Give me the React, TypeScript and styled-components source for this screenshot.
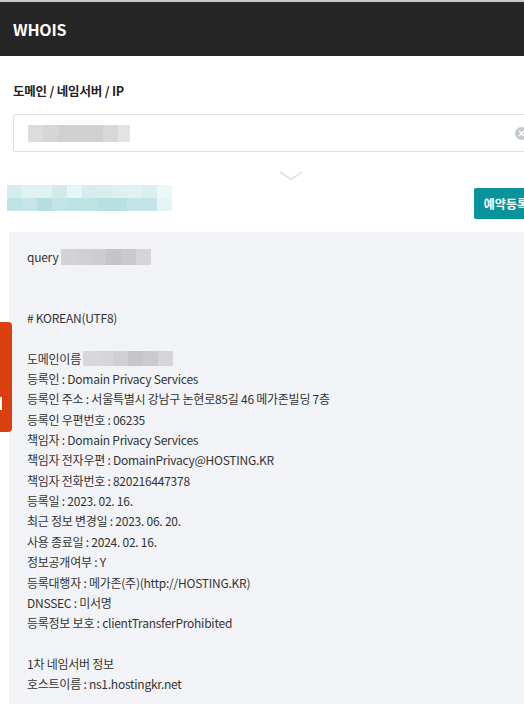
import React from "react";
import styled, { createGlobalStyle } from "styled-components";

const Global = createGlobalStyle`
  html, body { margin: 0; padding: 0; overflow: hidden; background: #fff; }
  body { font-family: "Noto Sans CJK KR", "Noto Sans", sans-serif; color: #333; }
  * { box-sizing: border-box; }
`;

const Page = styled.div`
  width: 582px;
  border-top: 2px solid #c9c9c9;
`;

const Header = styled.header`
  height: 54px;
  background: #262626;
  display: flex;
  align-items: center;
  padding: 0 13px;
`;

const Title = styled.h1`
  margin: 0;
  font-size: 16px;
  font-weight: 700;
  color: #fff;
  letter-spacing: -0.2px;
`;

const Form = styled.section`
  padding: 26px 13px 0;
`;

const Label = styled.label`
  display: block;
  font-size: 12.5px;
  font-weight: 700;
  line-height: 18px;
  color: #222;
  letter-spacing: -0.2px;
`;

const InputBox = styled.div`
  position: relative;
  margin-top: 14px;
  height: 38px;
  border: 1px solid #dcdfe3;
  border-radius: 2px;
  display: flex;
  align-items: center;
  padding-left: 14px;
`;

const Clear = styled.span`
  position: absolute;
  right: 40px;
  top: 12px;
  width: 13px;
  height: 13px;
  border-radius: 50%;
  background: #c5c9d0;
  display: flex;
  align-items: center;
  justify-content: center;
`;

const Toggle = styled.div`
  display: flex;
  justify-content: center;
  padding: 19px 0 4px;
  height: 33px;
`;

const ResultBar = styled.div`
  display: flex;
  justify-content: space-between;
  align-items: flex-start;
  padding: 0 44px 0 7px;
  height: 34px;
`;

const ReserveButton = styled.button`
  margin-top: 3px;
  height: 31px;
  padding: 0 10px;
  border: 0;
  border-radius: 2px;
  background: #08949a;
  color: #fff;
  font-family: "Noto Sans CJK KR", sans-serif;
  font-size: 12px;
  font-weight: 700;
`;

const Panel = styled.pre`
  margin: 13px 0 0 9px;
  padding: 15px 18px 20px;
  background: #f2f3f7;
  font-family: "Noto Sans CJK KR", "Noto Sans", sans-serif;
  font-size: 12px;
  line-height: 20.35px;
  letter-spacing: -0.25px;
  color: #333;
  white-space: pre;
  min-height: 480px;
`;

const Line = styled.div`
  display: flex;
  align-items: center;
  height: 20.35px;
`;

const Mosaic = styled.span<{ $cell: number; $h: number }>`
  display: inline-flex;
  flex-direction: column;
  & > span { display: flex; height: ${(p) => p.$h}px; }
  & > span > i { display: block; width: ${(p) => p.$cell}px; height: 100%; }
`;

const SideTab = styled.div`
  position: absolute;
  left: 0;
  top: 322px;
  width: 12px;
  height: 110px;
  background: #da3f0f;
  border-radius: 0 4px 4px 0;
`;

const SideMark = styled.span`
  position: absolute;
  left: 0;
  top: 75px;
  width: 2px;
  height: 13px;
  background: #fff;
`;

const Root = styled.div`
  position: relative;
`;

function Pix({ rows, cell, h }: { rows: string[][]; cell: number | number[]; h: number }) {
  return (
    <Mosaic $cell={typeof cell === "number" ? cell : 15} $h={h}>
      {rows.map((r, i) => (
        <span key={i}>
          {r.map((c, j) => (
            <i key={j} style={{ background: c, width: Array.isArray(cell) ? cell[j] : undefined }} />
          ))}
        </span>
      ))}
    </Mosaic>
  );
}

const teal = [
  ["#d5ecee", "#e0f1f2", "#e0f1f2", "#d3eaec", "#e8f5f6", "#d7ecee", "#d9edef", "#dff0f1", "#e2f2f3", "#dbeef0", "#eef7f8"],
  ["#c0e3e5", "#c6e5e7", "#b3dfe2", "#c3e4e6", "#bde3e5", "#bde3e5", "#b7e0e2", "#b7e0e2", "#c4e5e7", "#c4e5e7", "#e5f4f5"],
];

export default function App() {
  return (
    <Root>
      <Global />
      <Page>
        <Header>
          <Title>WHOIS</Title>
        </Header>
        <Form>
          <Label>도메인 / 네임서버 / IP</Label>
          <InputBox>
            <Pix rows={[["#dcdcdc", "#d6d6d6", "#d0d0d0", "#d9d9d9", "#e3e3e3"]]} cell={[15, 15, 45, 15, 12]} h={17} />
            <Clear>
              <svg width="7" height="7" viewBox="0 0 7 7">
                <path d="M1 1L6 6M6 1L1 6" stroke="#fff" strokeWidth="1.5" />
              </svg>
            </Clear>
          </InputBox>
        </Form>
        <Toggle>
          <svg width="24" height="10" viewBox="0 0 24 10">
            <polyline points="1,1 12,8.5 23,1" fill="none" stroke="#dfe1e5" strokeWidth="1.6" />
          </svg>
        </Toggle>
        <ResultBar>
          <Pix rows={teal} cell={15} h={13} />
          <ReserveButton>예약등록</ReserveButton>
        </ResultBar>
        <Panel>
          <Line>
            query&nbsp;<Pix rows={[["#d3d3d6", "#d0d0d3", "#cdcdd0", "#c6c4c8", "#cacacd", "#d6d6d9"]]} cell={15} h={16} />
          </Line>
          {"\n\n"}# KOREAN(UTF8){"\n\n"}
          <Line>
            도메인이름&nbsp;<Pix rows={[["#d8d8db", "#d6d6d9", "#d0d0d3", "#c6c6c9", "#cbcbce", "#d6d6d9"]]} cell={15} h={15} />
          </Line>
          {`등록인 : Domain Privacy Services
등록인 주소 : 서울특별시 강남구 논현로85길 46 메가존빌딩 7층
등록인 우편번호 : 06235
책임자 : Domain Privacy Services
책임자 전자우편 : DomainPrivacy@HOSTING.KR
책임자 전화번호 : 820216447378
등록일 : 2023. 02. 16.
최근 정보 변경일 : 2023. 06. 20.
사용 종료일 : 2024. 02. 16.
정보공개여부 : Y
등록대행자 : 메가존(주)(http://HOSTING.KR)
DNSSEC : 미서명
등록정보 보호 : clientTransferProhibited

1차 네임서버 정보
호스트이름 : ns1.hostingkr.net
`}
        </Panel>
      </Page>
      <SideTab>
        <SideMark />
      </SideTab>
    </Root>
  );
}
